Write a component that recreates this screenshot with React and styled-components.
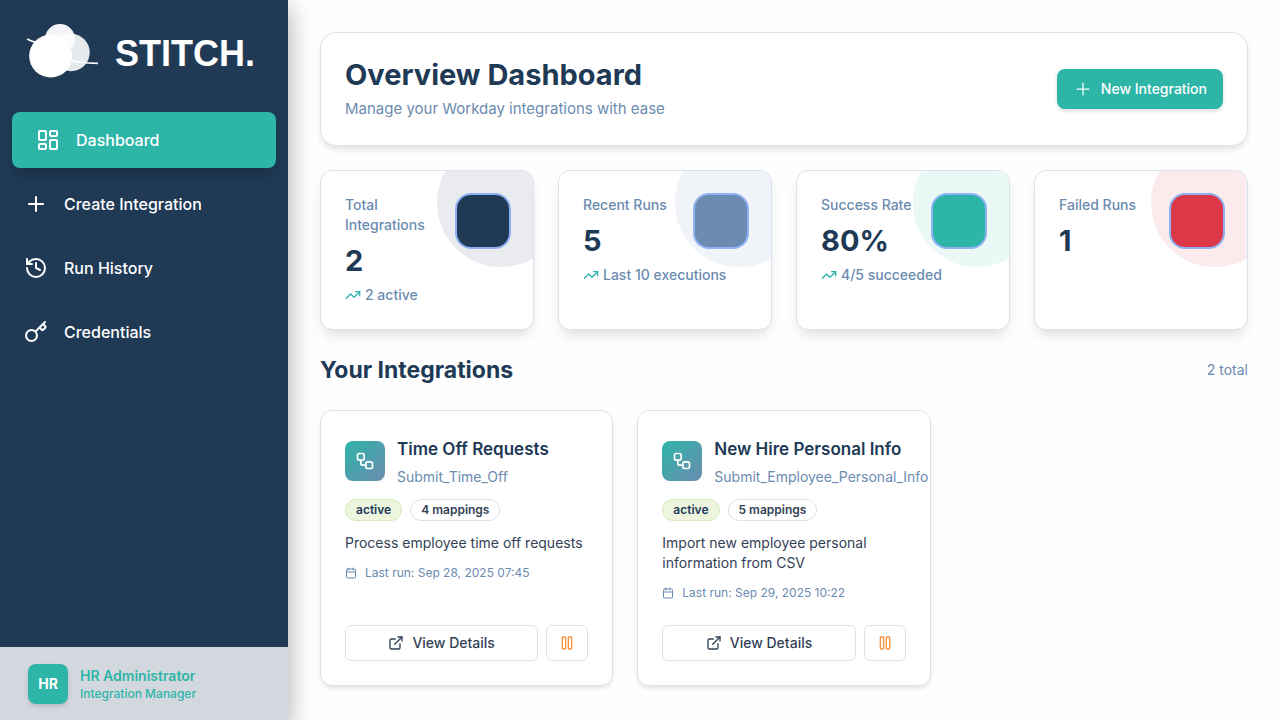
import React from "react";
import styled, { createGlobalStyle, css } from "styled-components";
import {
  Calendar,
  ExternalLink,
  History,
  Key,
  LayoutDashboard,
  Pause,
  Plus,
  TrendingUp,
  Workflow,
} from "lucide-react";

const navy = "#203a56";
const teal = "#2db5a8";
const slate = "#6b8bb0";
const ink = "#334155";
const line = "#dae3ed";

const GlobalStyle = createGlobalStyle`
  *, *::before, *::after { box-sizing: border-box; }
  body {
    margin: 0;
    background: #fefefe;
    color: ${navy};
    font-family: Inter, "Liberation Sans", sans-serif;
    font-size: 14px;
    line-height: 20px;
    -webkit-font-smoothing: antialiased;
  }
  h1, h2, h3, p, ul { margin: 0; padding: 0; }
  ul { list-style: none; }
  button { font: inherit; cursor: pointer; }
  svg { flex-shrink: 0; }
`;

const Shell = styled.div`
  display: flex;
  min-height: 100vh;
`;

const Sidebar = styled.aside`
  display: flex;
  flex-direction: column;
  flex: 0 0 288px;
  background: ${navy};
  box-shadow: 0 8px 24px rgba(0, 0, 0, 0.35);
`;

const Brand = styled.a`
  display: flex;
  align-items: center;
  gap: 16px;
  height: 108px;
  padding: 0 24px;
  color: #fff;
  text-decoration: none;
`;

const BrandMark = styled.svg`
  width: 75px;
  height: 60px;
`;

const BrandName = styled.span`
  font-family: "Liberation Sans", Arial, sans-serif;
  font-size: 36px;
  font-weight: 700;
  line-height: 40px;
`;

const Nav = styled.nav`
  flex: 1;
  padding: 4px 12px;
`;

const NavList = styled.ul`
  display: grid;
  gap: 8px;
`;

const NavLink = styled.a`
  display: flex;
  align-items: center;
  gap: 16px;
  height: 56px;
  padding: 0 12px;
  border-radius: 8px;
  color: #fff;
  font-size: 16px;
  font-weight: 500;
  line-height: 24px;
  text-decoration: none;
  ${({ $active }) =>
    $active &&
    css`
      padding: 0 24px;
      background: ${teal};
      box-shadow: 0 10px 15px -3px rgba(0, 0, 0, 0.2);
    `}
`;

const Account = styled.footer`
  display: flex;
  align-items: center;
  gap: 12px;
  padding: 16px 28px;
  border-top: 1px solid #cfd6de;
  background: #d3d8df;
  color: ${teal};
`;

const Avatar = styled.span`
  display: grid;
  place-items: center;
  width: 40px;
  height: 40px;
  border-radius: 8px;
  background: ${teal};
  color: #fff;
  font-weight: 700;
  box-shadow: 0 2px 4px rgba(0, 0, 0, 0.15);
`;

const AccountName = styled.p`
  font-weight: 600;
`;

const AccountRole = styled.p`
  font-size: 12px;
  font-weight: 500;
  line-height: 16px;
`;

const Main = styled.main`
  display: flex;
  flex-direction: column;
  flex: 1;
  gap: 24px;
  min-width: 0;
  padding: 32px;
`;

const Panel = styled.section`
  background: #fff;
  border: 1px solid ${line};
  border-radius: 12px;
`;

const Hero = styled(Panel)`
  display: flex;
  align-items: center;
  justify-content: space-between;
  padding: 24px;
  border-radius: 16px;
  box-shadow: 0 4px 6px -1px rgba(0, 0, 0, 0.12);
`;

const PageTitle = styled.h1`
  margin-bottom: 4px;
  font-size: 29px;
  font-weight: 700;
  line-height: 36px;
`;

const PageSubtitle = styled.p`
  color: ${slate};
  font-size: 15px;
  line-height: 24px;
`;

const PrimaryButton = styled.button`
  display: flex;
  align-items: center;
  gap: 8px;
  height: 40px;
  padding: 0 16px;
  border: 0;
  border-radius: 8px;
  background: ${teal};
  color: #fff;
  font-weight: 500;
  box-shadow: 0 2px 4px rgba(0, 0, 0, 0.15);
`;

const StatGrid = styled.div`
  display: grid;
  grid-template-columns: repeat(4, minmax(0, 1fr));
  gap: 24px;
`;

const StatCard = styled(Panel)`
  position: relative;
  overflow: hidden;
  padding: 24px;
  box-shadow: 0 8px 14px -4px rgba(0, 0, 0, 0.14);
`;

const StatHalo = styled.span`
  position: absolute;
  top: -32px;
  right: -32px;
  width: 128px;
  height: 128px;
  border-radius: 50%;
  background: ${({ $tint }) => $tint};
`;

const StatTop = styled.div`
  position: relative;
  display: flex;
  justify-content: space-between;
`;

const StatText = styled.div`
  flex: 1;
  min-width: 0;
  color: ${slate};
  font-weight: 500;
`;

const StatValue = styled.p`
  margin: 8px 0 6px;
  color: ${navy};
  font-size: 29px;
  font-weight: 700;
  line-height: 36px;
`;

const StatNote = styled.p`
  display: flex;
  align-items: center;
  gap: 4px;
  white-space: nowrap;
  svg { color: ${teal}; }
`;

const StatSwatch = styled.span`
  flex: 0 0 52px;
  height: 52px;
  border-radius: 14px;
  background: ${({ $color }) => $color};
  box-shadow: 0 0 0 2px #8fb2f5;
`;

const SectionHeader = styled.header`
  display: flex;
  align-items: center;
  justify-content: space-between;
  color: ${slate};
`;

const SectionTitle = styled.h2`
  color: ${navy};
  font-size: 23px;
  font-weight: 700;
  line-height: 32px;
`;

const CardGrid = styled.div`
  display: grid;
  grid-template-columns: repeat(3, minmax(0, 1fr));
  gap: 24px;
`;

const IntegrationCard = styled(Panel)`
  display: flex;
  flex-direction: column;
  gap: 12px;
  padding: 24px;
  box-shadow: 0 3px 5px -1px rgba(0, 0, 0, 0.12);
`;

const CardHeader = styled.header`
  display: flex;
  align-items: center;
  gap: 12px;
  white-space: nowrap;
`;

const CardIcon = styled.span`
  display: grid;
  place-items: center;
  flex: 0 0 40px;
  height: 40px;
  border-radius: 8px;
  background: linear-gradient(135deg, ${teal}, ${slate});
  color: #fff;
`;

const CardTitle = styled.h3`
  margin-bottom: 4px;
  font-size: 17px;
  font-weight: 600;
  line-height: 28px;
`;

const CardCode = styled.p`
  color: ${slate};
`;

const Badges = styled.div`
  display: flex;
  gap: 8px;
`;

const Badge = styled.span`
  padding: 2px 10px;
  border: 1px solid ${({ $active }) => ($active ? "#d3eab5" : line)};
  border-radius: 11px;
  background: ${({ $active }) => ($active ? "#edf5df" : "#fff")};
  color: ${({ $active }) => ($active ? navy : ink)};
  font-size: 12px;
  font-weight: 600;
  line-height: 16px;
`;

const Description = styled.p`
  color: ${ink};
`;

const LastRun = styled.p`
  display: flex;
  align-items: center;
  gap: 8px;
  color: ${slate};
  font-size: 12px;
  line-height: 16px;
`;

const Actions = styled.div`
  display: flex;
  gap: 8px;
  margin-top: auto;
  padding-top: 12px;
`;

const OutlineButton = styled.button`
  display: flex;
  align-items: center;
  justify-content: center;
  gap: 8px;
  flex: ${({ $icon }) => ($icon ? "0 0 42px" : "1")};
  height: 36px;
  padding: 0;
  border: 1px solid ${line};
  border-radius: 6px;
  background: #fff;
  color: ${({ $icon }) => ($icon ? "#fb923c" : ink)};
  font-weight: 500;
`;

const navItems = [
  { label: "Dashboard", Icon: LayoutDashboard, active: true },
  { label: "Create Integration", Icon: Plus },
  { label: "Run History", Icon: History },
  { label: "Credentials", Icon: Key },
];

const stats = [
  { label: "Total Integrations", value: "2", note: "2 active", color: navy, tint: "#e9ebee" },
  { label: "Recent Runs", value: "5", note: "Last 10 executions", color: slate, tint: "#f0f3f8" },
  { label: "Success Rate", value: "80%", note: "4/5 succeeded", color: teal, tint: "#eaf8f6" },
  { label: "Failed Runs", value: "1", color: "#dc3848", tint: "#fbebec" },
];

const integrations = [
  {
    title: "Time Off Requests",
    code: "Submit_Time_Off",
    mappings: "4 mappings",
    description: "Process employee time off requests",
    lastRun: "Sep 28, 2025 07:45",
  },
  {
    title: "New Hire Personal Info",
    code: "Submit_Employee_Personal_Info",
    mappings: "5 mappings",
    description: "Import new employee personal information from CSV",
    lastRun: "Sep 29, 2025 10:22",
  },
];

function Logo() {
  return (
    <BrandMark viewBox="0 2 75 60" aria-hidden="true">
      <circle cx="47" cy="30.5" r="18.7" fill="#e7eaed" />
      <circle cx="36" cy="17" r="15" fill="#f4f5f7" />
      <path d="M38 31 A15 15 0 0 0 50.2 12.1 A18.7 18.7 0 0 0 38 14 Z" fill="#fcfcfd" />
      <circle cx="26.7" cy="34" r="21.5" fill="#fff" />
      <path d="M3.2 17 Q6 18.6 12 20.5" fill="none" stroke="#fff" strokeWidth="1.8" />
      <path d="M36 36 Q54 41 74 41.4" fill="none" stroke="#fff" strokeWidth="1.8" />
    </BrandMark>
  );
}

export default function App() {
  return (
    <>
      <GlobalStyle />
      <Shell>
        <Sidebar>
          <Brand href="#">
            <Logo />
            <BrandName>STITCH.</BrandName>
          </Brand>
          <Nav>
            <NavList>
              {navItems.map(({ label, Icon, active }) => (
                <li key={label}>
                  <NavLink href="#" $active={active}>
                    <Icon size={24} />
                    {label}
                  </NavLink>
                </li>
              ))}
            </NavList>
          </Nav>
          <Account>
            <Avatar>HR</Avatar>
            <div>
              <AccountName>HR Administrator</AccountName>
              <AccountRole>Integration Manager</AccountRole>
            </div>
          </Account>
        </Sidebar>
        <Main>
          <Hero>
            <div>
              <PageTitle>Overview Dashboard</PageTitle>
              <PageSubtitle>Manage your Workday integrations with ease</PageSubtitle>
            </div>
            <PrimaryButton>
              <Plus size={20} strokeWidth={1.5} />
              New Integration
            </PrimaryButton>
          </Hero>
          <StatGrid>
            {stats.map((s) => (
              <StatCard key={s.label}>
                <StatHalo $tint={s.tint} />
                <StatTop>
                  <StatText>
                    <p>{s.label}</p>
                    <StatValue>{s.value}</StatValue>
                    {s.note && (
                      <StatNote>
                        <TrendingUp size={16} />
                        {s.note}
                      </StatNote>
                    )}
                  </StatText>
                  <StatSwatch $color={s.color} />
                </StatTop>
              </StatCard>
            ))}
          </StatGrid>
          <SectionHeader>
            <SectionTitle>Your Integrations</SectionTitle>
            <span>2 total</span>
          </SectionHeader>
          <CardGrid>
            {integrations.map((item) => (
              <IntegrationCard key={item.title}>
                <CardHeader>
                  <CardIcon>
                    <Workflow size={20} />
                  </CardIcon>
                  <div>
                    <CardTitle>{item.title}</CardTitle>
                    <CardCode>{item.code}</CardCode>
                  </div>
                </CardHeader>
                <Badges>
                  <Badge $active>active</Badge>
                  <Badge>{item.mappings}</Badge>
                </Badges>
                <Description>{item.description}</Description>
                <LastRun>
                  <Calendar size={12} />
                  Last run: {item.lastRun}
                </LastRun>
                <Actions>
                  <OutlineButton>
                    <ExternalLink size={16} />
                    View Details
                  </OutlineButton>
                  <OutlineButton $icon aria-label="Pause integration">
                    <Pause size={16} />
                  </OutlineButton>
                </Actions>
              </IntegrationCard>
            ))}
          </CardGrid>
        </Main>
      </Shell>
    </>
  );
}
